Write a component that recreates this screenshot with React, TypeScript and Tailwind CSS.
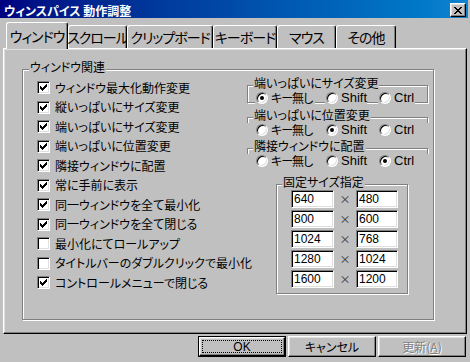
import React from "react";

const LATIN = "font-['Liberation_Sans',Arial,sans-serif]";

const CHECKS = [
  { label: "ウィンドウ最大化動作変更", on: true },
  { label: "縦いっぱいにサイズ変更", on: true },
  { label: "端いっぱいにサイズ変更", on: true },
  { label: "端いっぱいに位置変更", on: true },
  { label: "隣接ウィンドウに配置", on: true },
  { label: "常に手前に表示", on: true },
  { label: "同一ウィンドウを全て最小化", on: true },
  { label: "同一ウィンドウを全て閉じる", on: true },
  { label: "最小化にてロールアップ", on: false },
  { label: "タイトルバーのダブルクリックで最小化", on: false },
  { label: "コントロールメニューで閉じる", on: true },
];

const SIZES = [
  ["640", "480"],
  ["800", "600"],
  ["1024", "768"],
  ["1280", "1024"],
  ["1600", "1200"],
];

const TABS = [
  { label: "ウィンドウ", w: "w-[62px]" },
  { label: "スクロール", w: "w-[59px]" },
  { label: "クリップボード", w: "w-[86px]" },
  { label: "キーボード", w: "w-[64px]" },
  { label: "マウス", w: "w-[59px]" },
  { label: "その他", w: "w-[60px]" },
];

// sunken / raised bevels, win9x style
const SUNKEN =
  "border border-t-[#808080] border-l-[#808080] border-r-white border-b-white shadow-[inset_1px_1px_0_#000,inset_-1px_-1px_0_#dfdfdf]";
const RAISED =
  "border border-t-white border-l-white border-r-black border-b-black shadow-[inset_-1px_-1px_0_#808080,inset_1px_1px_0_#dfdfdf]";
const ETCHED = "border border-[#808080] shadow-[inset_1px_1px_0_#fff,1px_1px_0_#fff]";

function CheckBox({ on }: { on: boolean }) {
  return (
    <span className={`relative w-[13px] h-[13px] shrink-0 bg-white ${SUNKEN}`}>
      {on && (
        <svg
          className="absolute left-[2px] top-[2px]"
          width="7"
          height="7"
          viewBox="0 0 7 7"
          shapeRendering="crispEdges"
        >
          <path
            fill="#000"
            d="M6 0h1v1h-1z M5 1h2v1h-2z M0 2h1v1h-1z M4 2h3v1h-3z M0 3h2v1h-2z M3 3h3v1h-3z M0 4h5v1h-5z M1 5h3v1h-3z M2 6h1v1h-1z"
          />
        </svg>
      )}
    </span>
  );
}

function Radio({ on }: { on: boolean }) {
  return (
    <span className={`relative w-[12px] h-[12px] shrink-0 rounded-full bg-white ${SUNKEN}`}>
      {on && <span className="absolute left-[3px] top-[3px] w-[4px] h-[4px] rounded-full bg-black" />}
    </span>
  );
}

function RadioGroup({
  label,
  selected,
  full,
  className,
}: {
  label: string;
  selected: number;
  full?: boolean;
  className?: string;
}) {
  const items = [
    { text: "キー無し", w: "w-[60px]", ml: "", latin: false },
    { text: "Shift", w: "w-[42px]", ml: "ml-[10px]", latin: true },
    { text: "Ctrl", w: "w-[37px]", ml: "ml-[11px]", latin: true },
  ];
  return (
    <div className={className}>
      <div className={`relative ${ETCHED} ${full ? "h-[8px]" : "h-[18px]"}`}>
        <span className="absolute -top-[9px] left-[5px] px-[1px] bg-[#c0c0c0] leading-[12px] whitespace-nowrap">
          {label}
        </span>
      </div>
      <div
        className={`relative flex h-[13px] ${
          full ? "-mt-[2px] -mx-[2px] pl-[10px] bg-[#c0c0c0]" : "-mt-[12px] pl-[8px]"
        }`}
      >
        {items.map((it, i) => (
          <div
            key={it.text}
            className={`flex items-center gap-[3px] pl-[1px] h-full bg-[#c0c0c0] ${it.w} ${it.ml}`}
          >
            <Radio on={i === selected} />
            <span
              className={`leading-[13px] whitespace-nowrap ${
                it.latin ? `${LATIN} text-[13px]` : "tracking-[-1px]"
              }`}
            >
              {it.text}
            </span>
          </div>
        ))}
      </div>
    </div>
  );
}

export default function App() {
  return (
    <div className="w-[470px] h-[362px] overflow-hidden flex flex-col bg-[#c0c0c0] text-black text-[12px] font-['Noto_Sans_CJK_JP',sans-serif] [font-feature-settings:'palt']">
      {/* title bar */}
      <div className="h-[18px] mr-[2px] flex items-start justify-between pl-[4px] pr-[2px] bg-linear-to-r from-[#000080] to-[#1084d0]">
        <span className="mt-[4px] leading-[13px] font-bold text-white whitespace-nowrap">
          ウィンスパイス 動作調整
        </span>
        <div className={`mt-[3px] w-[16px] h-[14px] flex items-center justify-center bg-[#c0c0c0] ${RAISED}`}>
          <svg width="8" height="7" viewBox="0 0 8 7" shapeRendering="crispEdges">
            <path
              fill="#000"
              d="M0 0h2v1H0z M6 0h2v1H6z M1 1h2v1H1z M5 1h2v1H5z M2 2h4v1H2z M3 3h2v1H3z M2 4h4v1H2z M1 5h2v1H1z M5 5h2v1H5z M0 6h2v1H0z M6 6h2v1H6z"
            />
          </svg>
        </div>
      </div>

      {/* tabs */}
      <div className="relative z-10 flex items-end h-[27px] mt-[4px] pl-[6px]">
        {TABS.map((t, i) => (
          <div
            key={t.label}
            className={`${t.w} ${
              i === 0 ? "h-[27px] pb-[1px]" : "h-[23px] mb-[1px]"
            } flex items-center justify-center bg-[#c0c0c0] rounded-t-[3px] border-t border-l border-r border-t-white border-l-white border-r-black shadow-[inset_-1px_0_0_#808080] text-[14px] leading-[16px] tracking-[-1px] whitespace-nowrap`}
          >
            {t.label}
          </div>
        ))}
      </div>

      {/* tab panel */}
      <div className={`-mt-px mx-[3px] h-[286px] pt-[20px] pl-[18px] ${RAISED}`}>
        <div className={`relative w-[412px] h-[251px] ${ETCHED}`}>
          <span className="absolute -top-[9px] left-[6px] px-[1px] bg-[#c0c0c0] leading-[12px]">
            ウィンドウ関連
          </span>
          <div className="flex pl-[14px] pt-[8px]">
            <div className="w-[210px] flex flex-col">
              {CHECKS.map((c) => (
                <div key={c.label} className="h-[19.5px] flex items-center gap-[5px]">
                  <CheckBox on={c.on} />
                  <span className="leading-[14px] whitespace-nowrap">{c.label}</span>
                </div>
              ))}
            </div>
            <div className="w-[181px] pt-[7px] flex flex-col">
              <RadioGroup label="端いっぱいにサイズ変更" selected={0} />
              <RadioGroup label="端いっぱいに位置変更" selected={1} full className="mt-[13px]" />
              <RadioGroup label="隣接ウィンドウに配置" selected={2} full className="mt-[12px]" />

              <div className={`relative mt-[17px] ml-[29px] w-[132px] h-[110px] pt-[5px] pl-[14px] ${ETCHED}`}>
                <span className="absolute -top-[9px] left-[5px] px-[1px] bg-[#c0c0c0] leading-[12px] whitespace-nowrap">
                  固定サイズ指定
                </span>
                <div className="flex flex-col gap-[2px]">
                  {SIZES.map(([w, h]) => (
                    <div key={w + h} className="flex items-center h-[18px]">
                      <input
                        readOnly
                        defaultValue={w}
                        className={`w-[43px] h-[18px] pl-[2px] bg-white outline-none text-[12px] ${LATIN} ${SUNKEN}`}
                      />
                      <span className="w-[22px] text-center leading-[12px] text-[11px] text-[#333]">×</span>
                      <input
                        readOnly
                        defaultValue={h}
                        className={`w-[42px] h-[18px] pl-[2px] bg-white outline-none text-[12px] ${LATIN} ${SUNKEN}`}
                      />
                    </div>
                  ))}
                </div>
              </div>
            </div>
          </div>
        </div>
      </div>

      {/* buttons */}
      <div className="mt-[2px] flex justify-end gap-[2px] pr-[4px]">
        <div className="w-[88px] h-[21px] border border-black">
          <div className={`h-full p-[2px] ${RAISED}`}>
            <div className={`h-full flex items-center justify-center border border-dotted border-black text-[12px] leading-[12px] ${LATIN}`}>
              OK
            </div>
          </div>
        </div>
        <div className={`w-[88px] h-[21px] flex items-center justify-center leading-[12px] ${RAISED}`}>
          キャンセル
        </div>
        <div
          className={`w-[88px] h-[21px] flex items-center justify-center leading-[12px] text-[#808080] [text-shadow:1px_1px_0_#fff] ${RAISED}`}
        >
          更新(<span className="underline">A</span>)
        </div>
      </div>
    </div>
  );
}
